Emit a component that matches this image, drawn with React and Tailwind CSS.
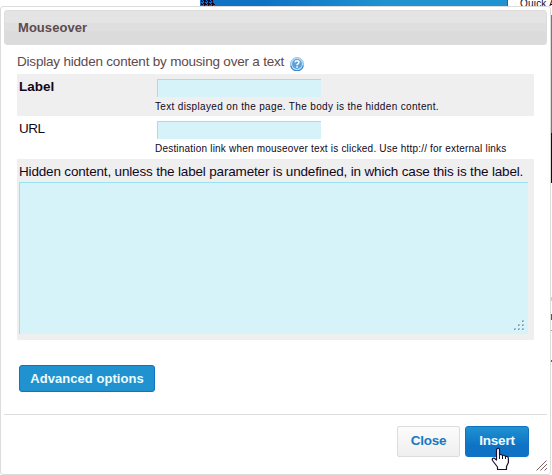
import React from 'react';

function HelpIcon() {
  return (
    <svg className="absolute left-[273px] top-[12px] h-[14px] w-[14px]" viewBox="0 0 14 14">
      <circle cx="7" cy="7" r="6.4" fill="#bfe6f5" stroke="#8fbbe0" strokeWidth="1" />
      <path d="M.8 8.5A6.3 6.3 0 0 0 13.2 8.5" fill="none" stroke="#2d7cc8" strokeWidth="1.1" />
      <circle cx="7" cy="7" r="4.9" fill="#5c9fdb" />
      <path d="M5 5.3Q5.2 3.7 7 3.7Q9 3.7 9 5.3Q9 6.3 7.1 7.6V8.3" fill="none" stroke="#fff" strokeWidth="1.5" />
      <rect x="6.3" y="9.3" width="1.6" height="1.5" fill="#fff" />
    </svg>
  );
}

function TextareaGrip() {
  return (
    <svg className="h-[12px] w-[12px]" viewBox="0 0 12 12" shapeRendering="crispEdges">
      {[[9, 0], [5, 4], [9, 4], [1, 8], [5, 8], [9, 8]].map(([x, y]) => (
        <g key={`${x}-${y}`}>
          <rect x={x} y={y} width="2" height="2" fill="#a9bfd0" />
          <rect x={x} y={y + 1} width="1" height="1" fill="#6f8fae" />
          <rect x={x + 1} y={y + 2} width="1" height="1" fill="#fff" />
        </g>
      ))}
    </svg>
  );
}

function HandCursor() {
  return (
    <svg className="absolute left-[491px] top-[447px] h-[24px] w-[19px]" viewBox="0 0 19 24">
      <path
        d="M6.5 1.5Q8.5 .5 8.5 3V8Q10 6.7 11.5 8.5Q13.4 7.7 14.4 9.5Q17.4 8.8 17.4 11.5V15.5L15.5 19.5V22.5H6.5V20L1.5 13.5Q.5 10.8 3 11L5.5 13V3Q5.5 2 6.5 1.5Z"
        fill="#fff"
        stroke="#1c1030"
        strokeWidth="1.2"
        strokeLinejoin="round"
      />
      <path d="M8.5 8V12M11.5 8.5V12M14.5 9.5V12" stroke="#1c1030" fill="none" />
    </svg>
  );
}

function Field({ label, hint, shaded, labelClass, hintClass }) {
  return (
    <div className={`flex h-[42px] w-[517px] ${shaded ? 'bg-[#efefef]' : 'bg-white'}`}>
      <div className={`w-[138px] pl-[2px] pt-[4px] leading-[17px] ${labelClass}`}>{label}</div>
      <div className="pt-[5px]">
        <input className="ml-[2px] block h-[18px] w-[164px] border-l border-t border-[#9ae2f2] bg-[#d5f3f9] outline-none" />
        <div className={`mt-[3px] whitespace-nowrap text-[10px] leading-[13px] ${hintClass}`}>{hint}</div>
      </div>
    </div>
  );
}

export default function App() {
  return (
    <div className="relative h-[475px] w-[552px] overflow-hidden bg-white font-['Liberation_Sans',Arial,sans-serif] text-[#100820]">
      <div className="flex h-[6px] overflow-hidden">
        <div className="ml-[200px] w-[307px] shrink-0 bg-linear-to-r from-[#0f72c4] from-20% to-[#2092d0] to-60%">
          <svg className="block h-[6px] w-[16px]" viewBox="0 0 16 6">
            <defs>
              <pattern id="speckle" width="4" height="3" patternUnits="userSpaceOnUse">
                <path d="M0 0h2v1h1v1H1v1H0zM3 0h1v1H3z" fill="#160826" />
              </pattern>
            </defs>
            <path d="M1 0H13V2L15 4V6H1Z" fill="url(#speckle)" />
          </svg>
        </div>
        <div className="w-px shrink-0 bg-[#67505a]" />
        <div className="ml-[12px] shrink-0 whitespace-nowrap text-[10px] leading-[7px] tracking-[0.2px]">Quick A</div>
      </div>
      <div className="flex">
        <main className="flex h-[469px] w-[551px] flex-col rounded-[3px] border border-[#dcdcdc] bg-white px-[3px] pt-[3px]">
          <header className="h-[35px] w-[543px] shrink-0 rounded-[3px] border border-[#dddddd] bg-[linear-gradient(#e4e4e4_0_12px,#dfdfdf_12px_20px,#dbdbdb_20px)] pl-[13px] text-[13px] font-bold leading-[33px] tracking-[0.05px] text-[#5d4a4c]">
            Mouseover
          </header>
          <section className="ml-[13px] text-[13.5px]">
            <div className="relative h-[29px] pt-[8px]">
              <div className="whitespace-nowrap leading-[18px] tracking-[-0.2px] text-[#5d4a4c]">
                Display hidden content by mousing over a text
              </div>
              <HelpIcon />
            </div>
            <Field label="Label" hint="Text displayed on the page. The body is the hidden content." shaded labelClass="font-bold" hintClass="tracking-[0.34px]" />
            <Field label="URL" hint="Destination link when mouseover text is clicked. Use http:// for external links" labelClass="tracking-[-0.5px]" hintClass="tracking-[0.2px]" />
            <div className="mt-px h-[181px] w-[517px] bg-[#efefef] pl-[2px] pt-[3px]">
              <div className="h-[20px] whitespace-nowrap leading-[19px] tracking-[-0.17px]">
                Hidden content, unless the label parameter is undefined, in which case this is the label.
              </div>
              <div className="flex h-[152px] w-[509px] items-end justify-end border-l border-t border-[#9ae2f2] bg-[#d5f3f9] pb-[2px] pr-[3px]">
                <TextareaGrip />
              </div>
            </div>
            <button className="ml-[2px] mt-[25px] block h-[27px] w-[136px] whitespace-nowrap rounded-[3px] border border-[#0f72c4] bg-[#2092d0] text-[13px] font-bold leading-[25px] tracking-[0.05px] text-[#edfcff]">
              Advanced options
            </button>
          </section>
          <footer className="mt-[22px] flex h-[60px] justify-end gap-[5px] border-t border-[#dcdcdc] pr-[18px] pt-[11px] text-[13.5px] font-bold">
            <button className="h-[31px] w-[63px] rounded-[2px] border border-[#dcdcdc] bg-linear-to-b from-[#fcfcfc] to-[#efefef] tracking-[-0.3px] text-[#1778c3]">Close</button>
            <button className="h-[31px] w-[64px] rounded-[3px] border border-[#0f72c4] bg-linear-to-b from-[#2092d0] to-[#0f72c4] to-65% tracking-[-0.2px] text-[#edfcff]">Insert</button>
          </footer>
        </main>
        <div className="w-px pt-[9px]">
          <div className="h-[118px] bg-[#2092d0]" />
          <div className="h-[50px] bg-[#180820]" />
          <div className="mt-[114px] h-[4px] bg-[#9ae2f2]" />
          <div className="mt-[13px] h-[6px] bg-[#67505a]" />
          <div className="mt-[10px] h-px bg-[#78aacc]" />
          <div className="mt-[29px] h-[2px] bg-[#4a6090]" />
        </div>
      </div>
      <HandCursor />
      <svg className="absolute left-[536px] top-[460px] h-[11px] w-[12px]" viewBox="0 0 12 11">
        <path d="M.5 10.5L10.5 .5M4.5 10.5L11 4M8.5 10.5L11 8" stroke="#806260" fill="none" />
      </svg>
    </div>
  );
}
